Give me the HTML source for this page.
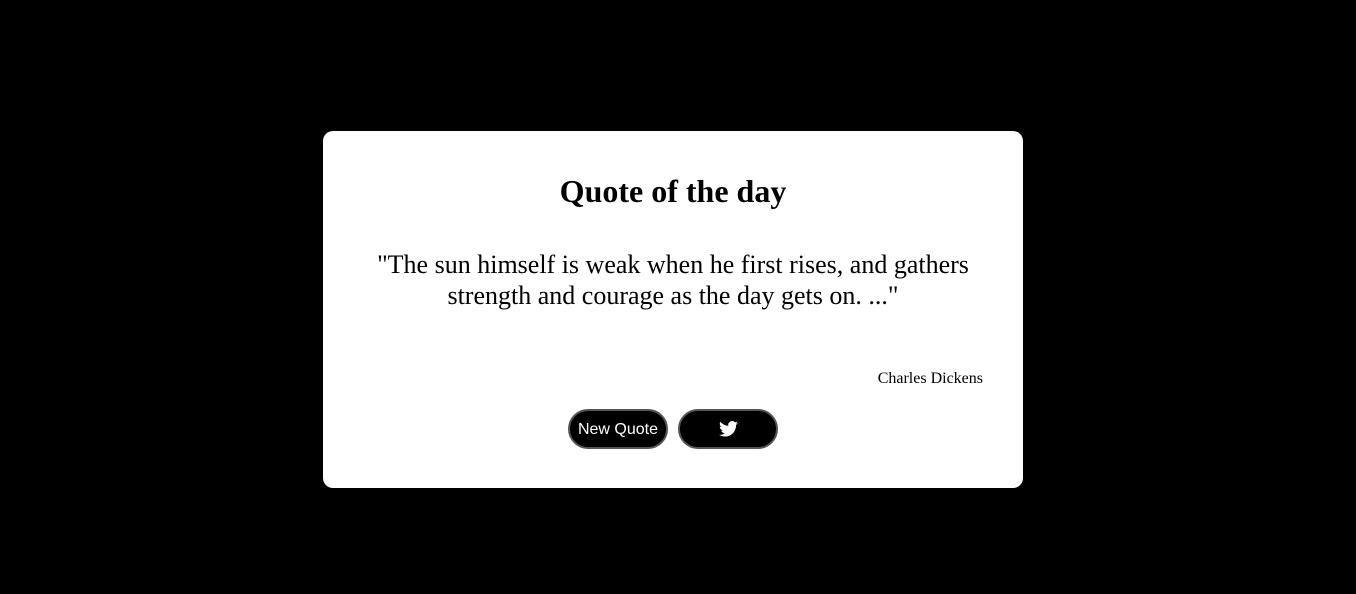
<!DOCTYPE html>
<html><head><meta charset="utf-8"><style>
html,body{margin:0;padding:0;background:#000;width:1356px;height:594px;overflow:hidden}
.card{position:absolute;left:323px;top:131px;width:700px;height:357px;background:#fff;border-radius:10px;font-family:"Liberation Serif",serif;color:#000}
h1{position:absolute;top:42px;left:0;width:100%;text-align:center;margin:0;font-size:32px;font-weight:bold}
.q{position:absolute;top:118px;left:40px;width:620px;text-align:center;font-size:26px;line-height:31px}
.a{position:absolute;top:239px;right:40px;font-size:16px}
.btn{position:absolute;top:278px;height:36px;border-radius:20px;background:#000;border:2px solid #555;color:#fff;font-family:"Liberation Sans",sans-serif;font-size:16px;display:flex;align-items:center;justify-content:center;box-sizing:content-box}
</style></head><body>
<div class="card">
<h1>Quote of the day</h1>
<div class="q">"The sun himself is weak when he first rises, and gathers strength and courage as the day gets on. ..."</div>
<div class="a">Charles Dickens</div>
<div class="btn" style="left:245px;width:96px;padding-top:1px;height:35px">New Quote</div>
<div class="btn" style="left:355px;width:96px"><svg width="19" height="16" viewBox="0 0 24 20"><path fill="#fff" d="M24 2.4a9.8 9.8 0 0 1-2.8.8A4.9 4.9 0 0 0 23.3.4a9.9 9.9 0 0 1-3.1 1.2A4.9 4.9 0 0 0 11.8 6 14 14 0 0 1 1.7.9a4.9 4.9 0 0 0 1.5 6.6A4.9 4.9 0 0 1 1 6.9 4.9 4.9 0 0 0 4.9 11.8a4.9 4.9 0 0 1-2.2.1 4.9 4.9 0 0 0 4.6 3.4A9.9 9.9 0 0 1 0 17.3 14 14 0 0 0 7.5 19.5c9.1 0 14-7.5 14-14v-.6A10 10 0 0 0 24 2.4z"/></svg></div>
</div>
</body></html>
